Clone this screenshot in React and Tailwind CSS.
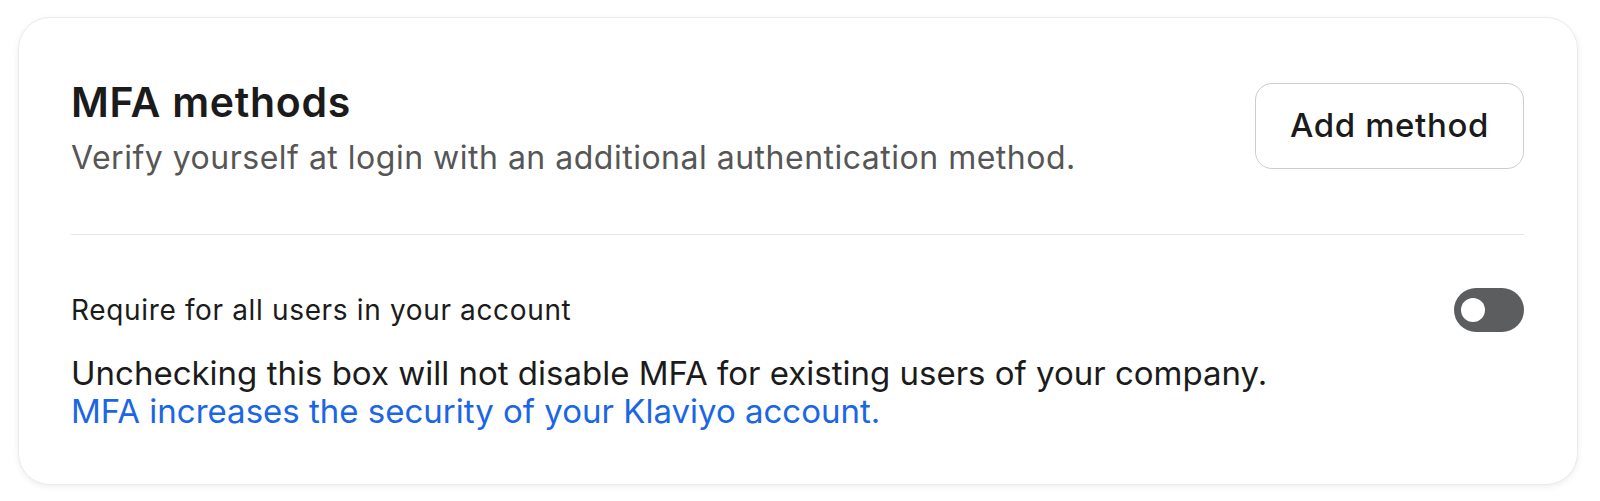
export default function App() {
  return (
    <div className="w-[1600px] h-[501px] bg-white pt-[17px] pl-[18px]" style={{ fontFamily: "Inter, 'Noto Sans', sans-serif" }}>
      <div className="w-[1560px] h-[468px] rounded-[32px] bg-white border border-[#ebebeb] shadow-[0_2px_6px_rgba(0,0,0,0.07)] pl-[52px] pr-[53px] pt-[60px]">
        <div className="flex items-start justify-between">
          <div>
            <h2 className="text-[41px] leading-[48px] font-semibold text-[#1b1b1b] tracking-[0.7px]">MFA methods</h2>
            <p className="mt-[12px] text-[32px] leading-[40px] text-[#565656] tracking-[0.5px]">Verify yourself at login with an additional authentication method.</p>
          </div>
          <button className="mt-[5px] w-[269px] h-[86px] rounded-[17px] border border-[#c9cdd4] bg-white text-[33px] font-medium text-[#1b1b1b] tracking-[0.6px]">Add method</button>
        </div>
        <div className="mt-[56px] h-px bg-[#e6e7e9]" />
        <div className="mt-[53px] h-[44px] flex items-center justify-between">
          <span className="text-[28px] leading-[36px] text-[#1b1b1b] tracking-[0.65px]">Require for all users in your account</span>
          <div className="w-[70px] h-[44px] rounded-full bg-[#5c5d5f] flex items-center pl-[7px]">
            <div className="w-[24px] h-[24px] rounded-full bg-white" />
          </div>
        </div>
        <div className="mt-[22px] text-[33px] leading-[38px]">
          <p className="text-[#1b1b1b]">Unchecking this box will not disable MFA for existing users of your company.</p>
          <a className="text-[#1b66e6]">MFA increases the security of your Klaviyo account.</a>
        </div>
      </div>
    </div>
  );
}
